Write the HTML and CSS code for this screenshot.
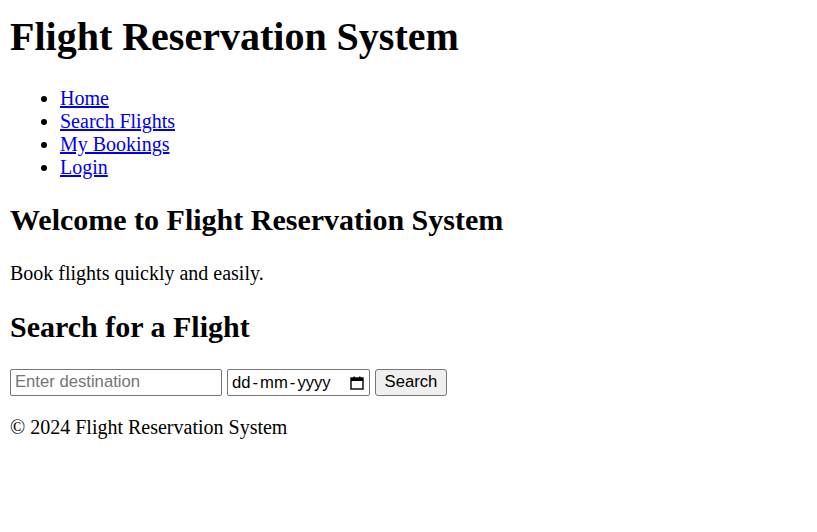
FILE: index.html
```html
<!DOCTYPE html>
<html lang="en">
<head>
<meta charset="utf-8">
<title>Flight Reservation System</title>
<link rel="stylesheet" href="styles.css">
</head>
<body>
<header class="site-header">
  <h1 class="site-title">Flight Reservation System</h1>
  <nav class="site-nav">
    <ul class="nav-list">
      <li><a href="#">Home</a></li>
      <li><a href="#">Search Flights</a></li>
      <li><a href="#">My Bookings</a></li>
      <li><a href="#">Login</a></li>
    </ul>
  </nav>
</header>
<main class="content">
  <section class="intro">
    <h2 class="section-title">Welcome to Flight Reservation System</h2>
    <p class="text intro-text">Book flights quickly and easily.</p>
  </section>
  <section class="search">
    <h2 class="section-title">Search for a Flight</h2>
    <form class="search-form">
      <input class="field field-text" type="text" placeholder="Enter destination">
      <div class="field field-date" role="textbox" aria-label="Date">
        <span class="date-text">dd<span class="sep">-</span>mm<span class="sep">-</span>yyyy</span>
        <svg class="cal-icon" width="14" height="14" viewBox="0 0 14 14" aria-hidden="true">
          <rect x="1" y="2" width="12" height="11" fill="none" stroke="#000" stroke-width="1.4"/>
          <rect x="1" y="2" width="12" height="3" fill="#000"/>
          <rect x="3.5" y="0.5" width="1.4" height="2.5" fill="#000"/>
          <rect x="9.1" y="0.5" width="1.4" height="2.5" fill="#000"/>
        </svg>
      </div>
      <button class="btn" type="button">Search</button>
    </form>
  </section>
</main>
<footer class="site-footer">
  <p class="text">&copy; 2024 Flight Reservation System</p>
</footer>
</body>
</html>
```

FILE: styles.css
```css
html { background: #fff; }
body {
  margin: 13px 10px 10px;
  font-family: "Liberation Serif", "Times New Roman", serif;
  font-size: 20px;
  color: #000;
}
.site-title {
  font-size: 40px;
  font-weight: bold;
  margin: 0 0 26.8px;
}
.nav-list {
  margin: 20px 0;
  padding-left: 50px;
}
.nav-list a { color: #0000ee; }
.section-title {
  font-size: 30px;
  font-weight: bold;
  margin: 24px 0 25px;
}
.text { margin: 20px 0; }
.intro-text { margin-bottom: 25px; }
.search-form {
  display: flex;
  align-items: center;
  gap: 5px;
  margin: 0;
}
.field, .btn {
  font-family: "Liberation Sans", Arial, sans-serif;
  font-size: 16.67px;
  box-sizing: border-box;
  height: 27px;
  margin: 0;
}
.field {
  border: 1px solid #767676;
  border-radius: 2px;
  padding: 1px 4px;
  background: #fff;
  color: #000;
}
.field::placeholder { color: #757575; }
.field-text { width: 212px; }
.field-date {
  width: 143px;
  display: flex;
  align-items: center;
  justify-content: space-between;
  padding: 1px 5px 0 4px;
}
.date-text { white-space: nowrap; }
.sep { margin: 0 2px; }
.cal-icon { display: block; }
.btn {
  width: 72px;
  border: 1px solid #767676;
  border-radius: 3px;
  background: #efefef;
  color: #000;
  padding: 1px 7px;
}
```
